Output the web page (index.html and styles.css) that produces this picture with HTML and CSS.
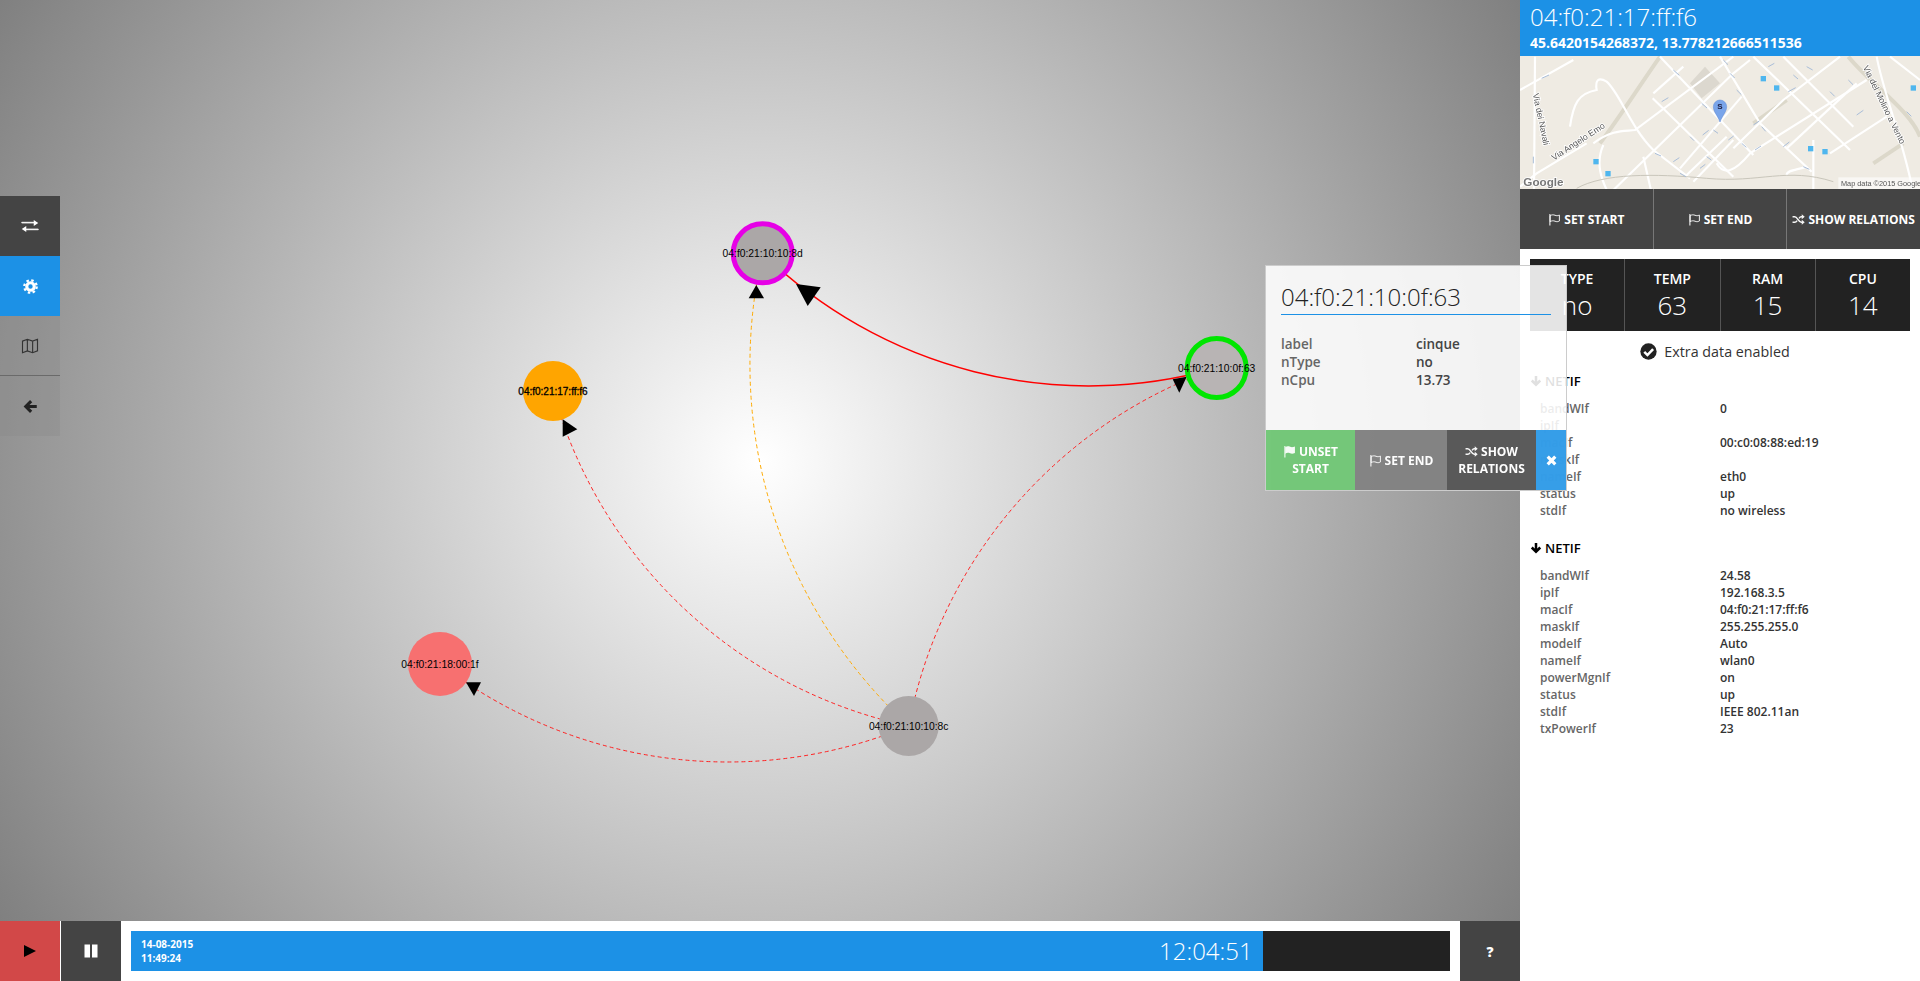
FILE: index.html
```html
<!DOCTYPE html>
<html lang="en">
<head>
<meta charset="utf-8">
<title>Network graph</title>
<link rel="stylesheet" href="styles.css">
</head>
<body>
<svg class="defs" width="0" height="0" aria-hidden="true">
  <symbol id="i-flag-o" viewBox="0 0 24 24"><path d="M3.500 2v21" fill="none" stroke="currentColor" stroke-width="2"/><path d="M4 5c3-2 6-2 9-.8s5 1 8-.4v11c-3 1.500-5 1.600-8 .4s-6-1.200-9 .8z" fill="none" stroke="currentColor" stroke-width="1.800"/></symbol>
  <symbol id="i-flag" viewBox="0 0 24 24"><path d="M3.500 2v21" fill="none" stroke="currentColor" stroke-width="2"/><path d="M4 4c3-2 6-2 9-.8s5 1 9-.6v12c-4 1.800-6 1.800-9 .6s-6-1.200-9 .8z" fill="currentColor"/></symbol>
  <symbol id="i-shuffle" viewBox="0 0 24 24"><path d="M1 7h4c5 0 7 10 12 10h2M1 17h4c2 0 3.500-1.500 4.500-3M13 10c1-1.600 2.300-3 4-3h2" fill="none" stroke="currentColor" stroke-width="2.600"/><path d="M18 2.500l5.500 4.500-5.500 4.500zM18 12.500l5.500 4.500-5.500 4.500z" fill="currentColor"/></symbol>
  <symbol id="i-exchange" viewBox="0 0 24 24"><path d="M1 8h17v-1H1zM23 16H6v1h17z" fill="currentColor" stroke="currentColor"/><path d="M17 4l6 4-6 4zM7 12l-6 4 6 4z" fill="currentColor"/></symbol>
  <symbol id="i-cog" viewBox="0 0 24 24"><circle cx="12" cy="12" r="6" fill="none" stroke="currentColor" stroke-width="5"/><circle cx="12" cy="12" r="10" fill="none" stroke="currentColor" stroke-width="3.500" stroke-dasharray="4 3.850"/></symbol>
  <symbol id="i-map" viewBox="0 0 24 24"><path d="M2 5.500l6.500-2.500 7 2.500 6.500-2.500v15.500l-6.500 2.500-7-2.500-6.500 2.500zM8.500 3v15.500M15.500 5.500v15.500" fill="none" stroke="currentColor" stroke-width="1.500"/></symbol>
  <symbol id="i-left" viewBox="0 0 24 24"><path d="M22 12H6M13 3.500L4.500 12l8.500 8.500" fill="none" stroke="currentColor" stroke-width="5"/></symbol>
  <symbol id="i-down" viewBox="0 0 24 24"><path d="M12 2v17M3.500 11l8.500 8.500 8.500-8.500" fill="none" stroke="currentColor" stroke-width="5"/></symbol>
  <symbol id="i-x" viewBox="0 0 24 24"><path d="M5 5l14 14M19 5L5 19" fill="none" stroke="currentColor" stroke-width="6"/></symbol>
  <symbol id="i-check" viewBox="0 0 24 24"><circle cx="12" cy="12" r="11.500" fill="currentColor"/><path d="M6 12.500l4.500 4.500 8-8.500" fill="none" stroke="#fff" stroke-width="3.600"/></symbol>
</svg>

<div class="app">
  <main class="main">
    <section class="stage">
      <svg class="graph" viewBox="0 0 1520 921" width="1520" height="921">
        <g class="edges">
          <path class="edge dash-red" d="M908.700 726A472 472 0 0 1 1216.700 368"/>
          <path class="edge dash-red" d="M908.700 726A470 470 0 0 1 553 391"/>
          <path class="edge dash-red" d="M908.700 726A472 472 0 0 1 440 664"/>
          <path class="edge dash-orange" d="M908.700 726A491 491 0 0 1 762.700 253.300"/>
          <path class="edge solid-red" d="M1216.700 368A467 467 0 0 1 762.700 253.300"/>
        </g>
        <g class="arrows">
          <polygon points="756.300,285 748.700,298.300 764,298.300"/>
          <polygon points="796,284 820.700,287.300 807.700,306"/>
          <polygon points="562.700,419.300 577.300,429.300 562.700,436.700"/>
          <polygon points="466,682.300 481,682.300 474,696"/>
          <polygon points="1172.700,379.300 1186.700,376.700 1179.300,392.700"/>
        </g>
        <circle class="node node-gray ring-magenta" cx="762.700" cy="253.300" r="29.500"/>
        <circle class="node node-orange" cx="553" cy="391" r="30"/>
        <circle class="node node-red" cx="440" cy="664" r="32"/>
        <circle class="node node-gray" cx="908.700" cy="726" r="30"/>
        <circle class="node node-pale ring-green" cx="1216.700" cy="368" r="29.500"/>
        <text class="label" x="762.700" y="257">04:f0:21:10:10:8d</text>
        <text class="label label-bold" x="553" y="394.500">04:f0:21:17:ff:f6</text>
        <text class="label" x="440" y="668">04:f0:21:18:00:1f</text>
        <text class="label" x="908.700" y="730">04:f0:21:10:10:8c</text>
        <text class="label" x="1216.700" y="372">04:f0:21:10:0f:63</text>
      </svg>

      <nav class="tools">
        <button class="tool tool-dark"><svg class="ico"><use href="#i-exchange"/></svg></button>
        <button class="tool tool-blue"><svg class="ico ico-s"><use href="#i-cog"/></svg></button>
        <button class="tool tool-clear tool-ruled"><svg class="ico"><use href="#i-map"/></svg></button>
        <button class="tool tool-clear"><svg class="ico ico-s"><use href="#i-left"/></svg></button>
      </nav>
    </section>

    <footer class="timeline">
      <button class="tl-btn tl-play"><svg class="tl-ico" viewBox="0 0 14 14"><polygon points="1,1 13,7 1,13"/></svg></button>
      <button class="tl-btn tl-pause"><svg class="tl-ico" viewBox="0 0 14 14"><rect x="0.500" y="0.500" width="5.500" height="13"/><rect x="8" y="0.500" width="5.500" height="13"/></svg></button>
      <div class="track">
        <div class="track-fill" style="width:85.8%">
          <div class="track-date"><span>14-08-2015</span><span>11:49:24</span></div>
          <div class="track-time">12:04:51</div>
        </div>
      </div>
      <button class="tl-btn tl-help">?</button>
    </footer>
  </main>

  <aside class="side">
    <header class="side-head">
      <h1 class="side-title">04:f0:21:17:ff:f6</h1>
      <p class="side-coords">45.6420154268372, 13.778212666511536</p>
    </header>

    <svg class="map" viewBox="0 -12 1200 399" width="400" height="133" preserveAspectRatio="none">
      <rect x="0" y="-12" width="1200" height="399" fill="#efebe3"/>
      <polygon points="510,70 555,20 600,70 545,115" fill="#dcd8cf"/>
      <g class="rd-tan">
        <path d="M240 250C300 170 350 90 420 -10"/>
        <path d="M700 190L800 120"/>
        <path d="M985 -10C1050 70 1170 150 1200 230"/>
        <path d="M1060 310L1150 250"/>
      </g>
      <g class="rd-wide">
        <path d="M0 90L160 0"/>
        <path d="M45 -10L42 400"/>
        <path d="M220 250C280 205 320 215 345 210L640 -10"/>
        <path d="M150 200C160 130 175 100 230 90C225 60 235 50 260 65C300 100 330 200 400 270L510 355"/>
        <path d="M420 -10L700 285"/>
        <path d="M398 115L640 350"/>
        <path d="M600 -10L720 190L875 335"/>
        <path d="M700 -10L990 270"/>
        <path d="M790 -10L1000 200"/>
        <path d="M270 400L640 40L690 0"/>
        <path d="M400 100L490 20"/>
        <path d="M480 325L665 110"/>
        <path d="M500 345L620 230"/>
        <path d="M520 365L640 240"/>
        <path d="M590 310C610 345 640 340 690 280L1040 60"/>
        <path d="M640 265L790 120L960 -10"/>
        <path d="M800 265L1010 70"/>
        <path d="M930 280L1100 170"/>
        <path d="M880 240V400"/>
        <path d="M1070 -10C1090 100 1150 240 1180 400"/>
        <path d="M1110 -10L1200 60"/>
        <path d="M250 255C225 310 245 360 265 400"/>
        <path d="M370 290L395 400"/>
        <path d="M0 380L50 340L200 250"/>
        <path d="M800 345C800 330 830 330 860 320"/>
      </g>
      <path class="rd-rail" d="M170 385C250 340 400 340 560 355S800 320 940 365"/>
      <path class="rd-arrows" d="M65 55l22-10M425 125l20-12M460 30l18 16M545 130l16 14M610 0l14 14M650 90l14 14M630 40l14 14M745 20l18-10M820 45l14 12M860 20l18 10M930 95l14 14M985 60l14 14M805 95l22-12M548 225l18-14M580 210l14 10M510 230l12 12M700 195l18-12M725 200l12 14M625 240l16-12M665 250l14 12M705 270l18-12M790 260l18-14M460 305l18-12M405 280l18 8M480 340l18 10M560 290l14 10M540 325l16-12M850 320l18 8M1010 165l20-14M1160 155l14 14M40 290v20"/>
      <g class="bus">
        <rect x="722" y="48" width="16" height="16"/><rect x="762" y="76" width="16" height="16"/><rect x="1172" y="76" width="16" height="16"/>
        <rect x="864" y="258" width="16" height="16"/><rect x="907" y="267" width="16" height="16"/><rect x="220" y="297" width="16" height="16"/><rect x="256" y="333" width="16" height="16"/>
      </g>
      <text class="map-road" transform="translate(38 102) rotate(78)">Via dei Navali</text>
      <text class="map-road" transform="translate(102 302) rotate(-33)">Via Angelo Emo</text>
      <text class="map-road" transform="translate(1028 22) rotate(64)">Via del Molino a Vento</text>
      <rect x="955" y="352" width="245" height="35" fill="#fff" opacity=".6"/>
      <text class="map-data" x="963" y="379">Map data ©2015 Google</text>
      <text class="map-logo" x="10" y="378">Google</text>
      <path d="M600 186C592 165 580 155 580 140a20 20 0 0 1 40 0C620 155 608 165 600 186z" fill="#7aa5ea" stroke="#5c88d6" stroke-width="1.500"/>
      <text class="map-pin" x="600" y="148">S</text>
    </svg>

    <div class="side-actions">
      <button class="act"><svg class="ico-t"><use href="#i-flag-o"/></svg>SET START</button>
      <button class="act"><svg class="ico-t"><use href="#i-flag-o"/></svg>SET END</button>
      <button class="act"><svg class="ico-t"><use href="#i-shuffle"/></svg>SHOW RELATIONS</button>
    </div>

    <div class="side-body">
      <div class="stats">
        <div class="stat"><span class="stat-k">TYPE</span><span class="stat-v">no</span></div>
        <div class="stat"><span class="stat-k">TEMP</span><span class="stat-v">63</span></div>
        <div class="stat"><span class="stat-k">RAM</span><span class="stat-v">15</span></div>
        <div class="stat"><span class="stat-k">CPU</span><span class="stat-v">14</span></div>
      </div>

      <div class="extra"><svg class="ico-c"><use href="#i-check"/></svg>Extra data enabled</div>

      <section class="netif">
        <h2 class="netif-h"><svg class="ico-d"><use href="#i-down"/></svg>NETIF</h2>
        <dl class="kv">
          <dt>bandWIf</dt><dd>0</dd>
          <dt>ipIf</dt><dd></dd>
          <dt>macIf</dt><dd>00:c0:08:88:ed:19</dd>
          <dt>maskIf</dt><dd></dd>
          <dt>nameIf</dt><dd>eth0</dd>
          <dt>status</dt><dd>up</dd>
          <dt>stdIf</dt><dd>no wireless</dd>
        </dl>
      </section>

      <section class="netif">
        <h2 class="netif-h"><svg class="ico-d"><use href="#i-down"/></svg>NETIF</h2>
        <dl class="kv">
          <dt>bandWIf</dt><dd>24.58</dd>
          <dt>ipIf</dt><dd>192.168.3.5</dd>
          <dt>macIf</dt><dd>04:f0:21:17:ff:f6</dd>
          <dt>maskIf</dt><dd>255.255.255.0</dd>
          <dt>modeIf</dt><dd>Auto</dd>
          <dt>nameIf</dt><dd>wlan0</dd>
          <dt>powerMgnIf</dt><dd>on</dd>
          <dt>status</dt><dd>up</dd>
          <dt>stdIf</dt><dd>IEEE 802.11an</dd>
          <dt>txPowerIf</dt><dd>23</dd>
        </dl>
      </section>
    </div>
  </aside>

  <article class="popup">
    <div class="popup-body">
      <h2 class="popup-title">04:f0:21:10:0f:63</h2>
      <dl class="popup-kv">
        <dt>label</dt><dd>cinque</dd>
        <dt>nType</dt><dd>no</dd>
        <dt>nCpu</dt><dd>13.73</dd>
      </dl>
    </div>
    <div class="popup-actions">
      <button class="pa pa-green"><svg class="ico-t"><use href="#i-flag"/></svg>UNSET START</button>
      <button class="pa pa-grey"><svg class="ico-t"><use href="#i-flag-o"/></svg>SET END</button>
      <button class="pa pa-dark"><svg class="ico-t"><use href="#i-shuffle"/></svg>SHOW RELATIONS</button>
      <button class="pa pa-blue"><svg class="ico-x"><use href="#i-x"/></svg></button>
    </div>
  </article>
</div>
</body>
</html>
```

FILE: styles.css
```css
* { box-sizing: border-box; }
html, body { margin: 0; height: 100%; overflow: hidden; }
body { font-family: "Open Sans", "Liberation Sans", sans-serif; color: #222; background: #fff; }
button { font: inherit; border: 0; padding: 0; margin: 0; color: inherit; background: none; }
h1, h2, p, dl, dd { margin: 0; }
.defs { position: absolute; }

.app { position: relative; display: grid; grid-template-columns: 1520px 400px; height: 981px; overflow: hidden; }
.main { display: flex; flex-direction: column; min-width: 0; }

/* graph */
.stage { position: relative; height: 921px; background: radial-gradient(circle farthest-corner at 50% 50%, #fff 0%, #808080 100%); }
.graph { display: block; }
.edge { fill: none; }
.dash-red { stroke: #f22; stroke-width: 1; stroke-dasharray: 4 3; }
.dash-orange { stroke: #fa0; stroke-width: 1; stroke-dasharray: 4 3; }
.solid-red { stroke: #f00; stroke-width: 1.500; }
.arrows polygon { fill: #000; }
.node-gray { fill: #aba7a7; }
.node-pale { fill: #b8b4b4; }
.node-orange { fill: #ffa500; }
.node-red { fill: #f77070; }
.ring-magenta { stroke: #e600e6; stroke-width: 5; }
.ring-green { stroke: #00e600; stroke-width: 5; }
.label { font-family: "Liberation Sans", Arial, sans-serif; font-size: 10.300px; text-anchor: middle; fill: #000; }
.label-bold { font-size: 10px; stroke: #000; stroke-width: .3px; }

/* left tools */
.tools { position: absolute; left: 0; top: 196px; width: 60px; display: flex; flex-direction: column; }
.tool { display: flex; align-items: center; justify-content: center; height: 60px; }
.tool-dark { background: #444; color: #fff; }
.tool-blue { background: #1c91e6; color: #fff; }
.tool-clear { background: rgba(136,136,136,.3); color: #222; }
.tool-ruled { color: #333; border-bottom: 1px solid #6a6a6a; }
.ico { width: 18px; height: 18px; }
.ico-s { width: 15px; height: 15px; }

/* timeline */
.timeline { display: flex; height: 60px; background: #fff; }
.tl-btn { flex: none; width: 60px; display: flex; align-items: center; justify-content: center; }
.tl-play { background: #d24848; color: #000; }
.tl-pause { margin-left: 1px; background: #444; color: #fff; }
.tl-help { background: #444; color: #fff; font-size: 14px; font-weight: 800; }
.tl-ico { width: 14px; height: 14px; fill: currentColor; }
.track { flex: 1; margin: 10px; background: #222; }
.track-fill { display: flex; justify-content: space-between; align-items: center; height: 100%; padding: 0 10px 0 10px; background: #1c91e6; color: #fff; }
.track-date { display: flex; flex-direction: column; font-size: 10px; line-height: 14.500px; font-weight: 700; }
.track-time { font-size: 24px; font-weight: 300; line-height: 40px; }

/* side */
.side { min-width: 0; display: flex; flex-direction: column; background: #fff; }
.side-head { height: 56px; padding: 0 10px; background: #1c91e6; color: #fff; }
.side-title { font-size: 24px; line-height: 33px; font-weight: 300; }
.side-coords { font-size: 14px; line-height: 20px; font-weight: 700; }
.map { display: block; flex: none; filter: blur(.4px); }
.rd-wide path { fill: none; stroke: #fff; stroke-width: 6.500; }
.rd-tan path { fill: none; stroke: #dcd8ca; stroke-width: 12; }
.rd-rail { fill: none; stroke: #c9c6bb; stroke-width: 3; }
.rd-arrows { fill: none; stroke: #a9bdd8; stroke-width: 3; }
.bus rect { fill: #4fb6ee; }
.map-road { font-family: "Liberation Sans", sans-serif; font-size: 26px; fill: #555; stroke: #fff; stroke-width: 5px; paint-order: stroke; }
.map-data { font-family: "Liberation Sans", sans-serif; font-size: 22px; fill: #555; }
.map-logo { font-family: "Liberation Sans", sans-serif; font-size: 35px; font-weight: 700; fill: #777; stroke: #fff; stroke-width: 5px; paint-order: stroke; }
.map-pin { font-family: "Liberation Sans", sans-serif; font-size: 24px; font-weight: 700; fill: #224; text-anchor: middle; }

.side-actions { display: flex; height: 60px; background: #444; color: #fff; }
.act { flex: 1; font-size: 12px; font-weight: 700; white-space: nowrap; display: flex; align-items: center; justify-content: center; border-left: 1px solid #777; }
.act:first-child { border-left: 0; }
.ico-t { width: 13px; height: 13px; margin-right: 3px; opacity: .95; vertical-align: -2px; }

.side-body { padding: 10px 10px 0; }
.stats { display: flex; height: 72px; background: #222; color: #fff; }
.stat { flex: 1; display: flex; flex-direction: column; align-items: center; padding-top: 10px; border-left: 1px solid #555; }
.stat:first-child { border-left: 0; }
.stat-k { font-size: 14px; line-height: 20px; font-weight: 600; }
.stat-v { font-size: 26px; line-height: 32px; font-weight: 300; }
.extra { display: flex; align-items: center; justify-content: center; height: 41px; padding-right: 10px; font-size: 14.300px; color: #333; }
.ico-c { width: 17px; height: 17px; margin-right: 7px; color: #222; }
.netif + .netif { margin-top: 20px; }
.netif-h { display: flex; align-items: center; height: 18px; margin-bottom: 10px; font-size: 13px; font-weight: 600; color: #000; }
.ico-d { width: 12px; height: 12px; margin-right: 3px; }
.kv { display: grid; grid-template-columns: 180px 1fr; grid-auto-rows: 17px; padding-left: 10px; font-size: 12px; line-height: 17px; }
.kv dt { font-weight: 600; color: #666; }
.kv dd { font-weight: 600; color: #333; }

/* popup */
.popup { position: absolute; left: 1265px; top: 265px; width: 302px; height: 226px; display: flex; flex-direction: column; background: rgba(255,255,255,.88); border: 1px solid #ccc; }
.popup-body { flex: 1; padding: 0 15px; }
.popup-title { height: 49px; margin-top: 0; padding-top: 14px; font-size: 24px; line-height: 34px; font-weight: 300; color: #222; border-bottom: 1px solid #1c91e6; }
.popup-kv { display: grid; grid-template-columns: 135px 1fr; grid-auto-rows: 18px; margin-top: 20px; font-size: 13.500px; line-height: 18px; font-weight: 600; }
.popup-kv dt { color: #666; }
.popup-kv dd { color: #444; }
.popup-actions { display: flex; height: 60px; color: #fff; }
.pa { flex: none; display: block; font-size: 12px; line-height: 17px; font-weight: 700; text-align: center; opacity: .98; }
.pa-green { width: 89px; padding: 0 14px; background: #72c777; }
.pa-grey { width: 92px; background: rgba(68,68,68,.65); }
.pa-dark { width: 89px; padding: 0 6px; background: rgba(51,51,51,.82); }
.pa-blue { flex: 1; display: flex; align-items: center; justify-content: center; background: rgba(28,145,230,.9); }
.ico-x { width: 13px; height: 13px; }
```
